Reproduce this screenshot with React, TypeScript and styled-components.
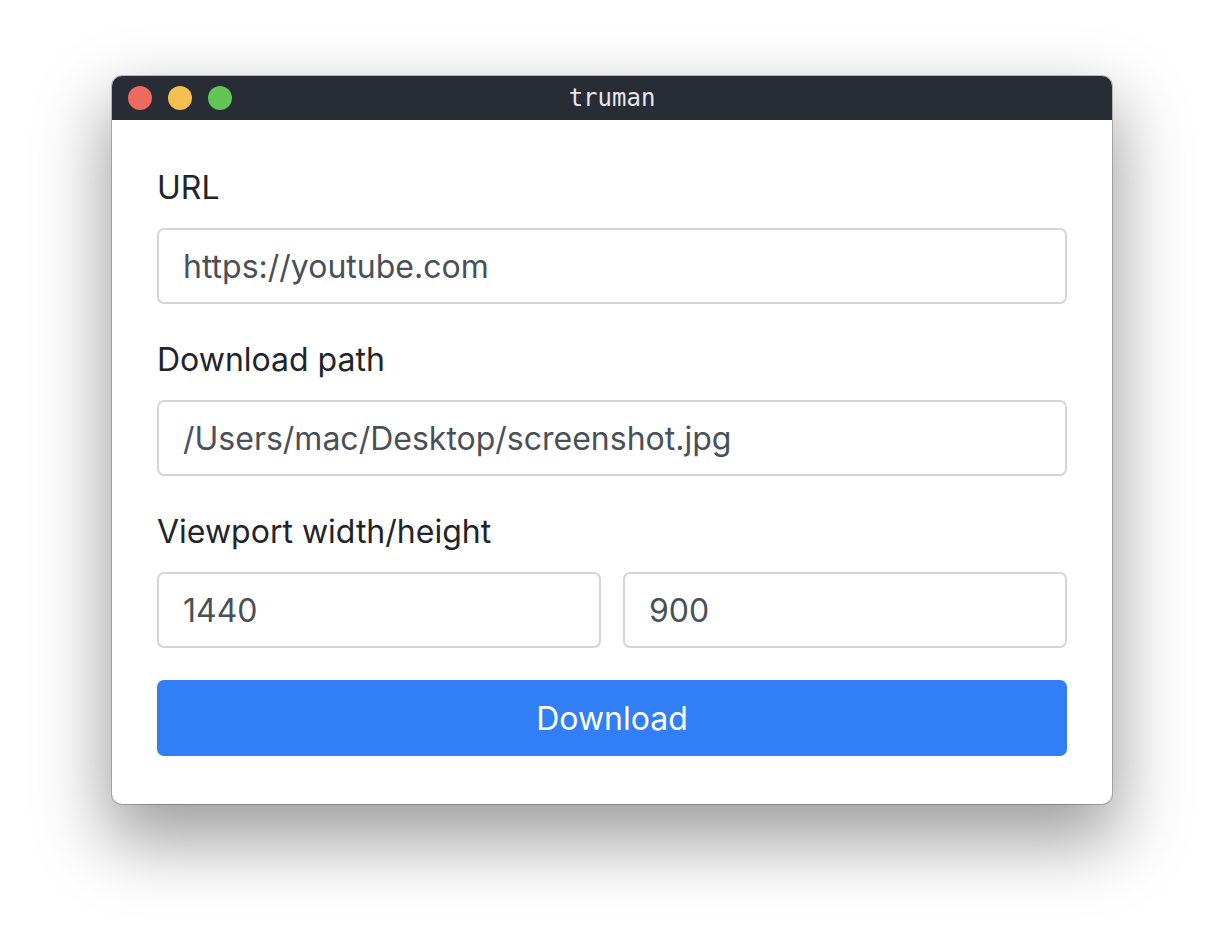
import React, { useState } from "react";
import styled, { createGlobalStyle } from "styled-components";

const GlobalStyle = createGlobalStyle`
  html, body {
    margin: 0;
    padding: 0;
    background: #ffffff;
  }
  * {
    box-sizing: border-box;
  }
`;

const Page = styled.div`
  display: flex;
  justify-content: center;
  align-items: flex-start;
  width: 1224px;
  height: 952px;
  padding-top: 76px;
  overflow: hidden;
`;

const Window = styled.div`
  width: 1000px;
  background: #ffffff;
  border-radius: 10px;
  overflow: hidden;
  box-shadow: 0 0 0 1px rgba(0, 0, 0, 0.22), 0 32px 70px 6px rgba(0, 0, 0, 0.38);
`;

const TitleBar = styled.div`
  position: relative;
  display: flex;
  align-items: center;
  justify-content: center;
  height: 44px;
  background: #282c34;
`;

const Lights = styled.div`
  position: absolute;
  left: 16px;
  top: 10px;
  display: flex;
  gap: 16px;
`;

const Light = styled.span<{ $color: string }>`
  display: block;
  width: 24px;
  height: 24px;
  border-radius: 50%;
  background: ${(p) => p.$color};
`;

const Title = styled.div`
  font-family: "DejaVu Sans Mono", "Liberation Mono", monospace;
  font-size: 24px;
  color: #e6e8eb;
`;

const Form = styled.form`
  display: flex;
  flex-direction: column;
  padding: 44px 45px 48px;
  font-family: Inter, "Noto Sans", sans-serif;
`;

const Group = styled.div`
  display: flex;
  flex-direction: column;
  margin-bottom: 32px;
`;

const Label = styled.label`
  font-size: 32px;
  line-height: 48px;
  color: #212529;
  margin-bottom: 16px;
`;

const Row = styled.div`
  display: grid;
  grid-template-columns: 1fr 1fr;
  gap: 22px;
`;

const Input = styled.input`
  width: 100%;
  height: 76px;
  padding: 12px 24px;
  font-family: inherit;
  font-size: 32px;
  color: #495057;
  background: #ffffff;
  border: 2px solid #d3d5d8;
  border-radius: 7px;
  outline: none;
`;

const Button = styled.button`
  height: 76px;
  font-family: inherit;
  font-size: 32px;
  color: #ffffff;
  background: #327ef6;
  border: none;
  border-radius: 7px;
  cursor: pointer;
`;

const App: React.FC = () => {
  const [url, setUrl] = useState("https://youtube.com");
  const [path, setPath] = useState("/Users/mac/Desktop/screenshot.jpg");
  const [width, setWidth] = useState("1440");
  const [height, setHeight] = useState("900");

  return (
    <>
      <GlobalStyle />
      <Page>
        <Window>
          <TitleBar>
            <Lights>
              <Light $color="#ec6a5e" />
              <Light $color="#f4bf4f" />
              <Light $color="#61c454" />
            </Lights>
            <Title>truman</Title>
          </TitleBar>
          <Form onSubmit={(e) => e.preventDefault()}>
            <Group>
              <Label>URL</Label>
              <Input value={url} onChange={(e) => setUrl(e.target.value)} />
            </Group>
            <Group>
              <Label>Download path</Label>
              <Input value={path} onChange={(e) => setPath(e.target.value)} />
            </Group>
            <Group>
              <Label>Viewport width/height</Label>
              <Row>
                <Input value={width} onChange={(e) => setWidth(e.target.value)} />
                <Input value={height} onChange={(e) => setHeight(e.target.value)} />
              </Row>
            </Group>
            <Button type="submit">Download</Button>
          </Form>
        </Window>
      </Page>
    </>
  );
};

export default App;
